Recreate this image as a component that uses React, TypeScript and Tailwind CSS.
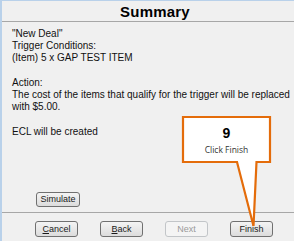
import React from "react";

const lines = [
	'"New Deal"',
	"Trigger Conditions:",
	"(Item) 5 x GAP TEST ITEM",
	"",
	"Action:",
	"The cost of the items that qualify for the trigger will be replaced",
	"with $5.00.",
	"",
	"ECL will be created",
];

function WinButton({
	children,
	disabled,
	className = "",
}: {
	children: React.ReactNode;
	disabled?: boolean;
	className?: string;
}) {
	return (
		<div
			className={
				"flex h-[16px] w-[43px] items-center justify-center rounded-[3px] border text-[9px] leading-none " +
				(disabled
					? "border-[#c2c5c8] bg-[#f4f4f4] text-[#9a9a9a] "
					: "border-[#707070] bg-gradient-to-b from-[#f4f4f4] to-[#dcdcdc] text-[#1a1a1a] ") +
				className
			}
		>
			{children}
		</div>
	);
}

export default function App() {
	return (
		<div
			className="relative flex h-[241px] w-[294px] flex-col overflow-hidden border-l-2 border-t border-[#b9d1ea] bg-[#f0f0f0] text-black"
			style={{ fontFamily: '"Liberation Sans", Arial, sans-serif' }}
		>
			{/* HEADER */}
			<div className="flex h-[21px] shrink-0 items-center justify-center border-b border-[#a7a7a7] pl-[14px]">
				<span className="text-[15px] font-bold leading-none tracking-[0.2px]">Summary</span>
			</div>

			{/* SUMMARY TEXT */}
			<div className="h-[170px] shrink-0 pl-[10px] pt-[6px] text-[10px] leading-[12.2px] text-[#111]">
				{lines.map((l, i) => (
					<div key={i} className="h-[12.2px] whitespace-nowrap">
						{l}
					</div>
				))}
			</div>

			{/* SIMULATE */}
			<div className="flex h-[20px] shrink-0 items-start pl-[34px]">
				<div className="flex h-[15px] w-[44px] items-center justify-center rounded-[3px] border border-[#707070] bg-gradient-to-b from-[#f4f4f4] to-[#dcdcdc] text-[9px] leading-none text-[#1a1a1a]">
					Simulate
				</div>
			</div>

			{/* FOOTER BUTTONS */}
			<div className="flex flex-1 items-start gap-[22px] border-t border-[#a7a7a7] pl-[33px] pt-[8px]">
				<WinButton>
					<span className="underline">C</span>ancel
				</WinButton>
				<WinButton>
					<span className="underline">B</span>ack
				</WinButton>
				<WinButton disabled>Next</WinButton>
				<WinButton>Finish</WinButton>
			</div>

			{/* CALLOUT */}
			<svg
				className="pointer-events-none absolute left-[-2px] top-[-1px]"
				width="294"
				height="241"
				viewBox="0 0 294 241"
			>
				<polygon
					points="183,117 270,117 270,162 256.5,162 253.5,226 237,162 183,162"
					fill="#ffffff"
					stroke="#e46c0a"
					strokeWidth="2.2"
					strokeLinejoin="miter"
				/>
			</svg>
			<div className="pointer-events-none absolute left-[181px] top-[116px] flex h-[45px] w-[87px] flex-col items-center">
				<span className="mt-[9px] text-[14px] font-bold leading-none">9</span>
				<span
					className="mt-[6px] text-[8.5px] leading-none text-[#333]"
					style={{ fontFamily: '"Open Sans", "Liberation Sans", sans-serif' }}
				>
					Click Finish
				</span>
			</div>
		</div>
	);
}
